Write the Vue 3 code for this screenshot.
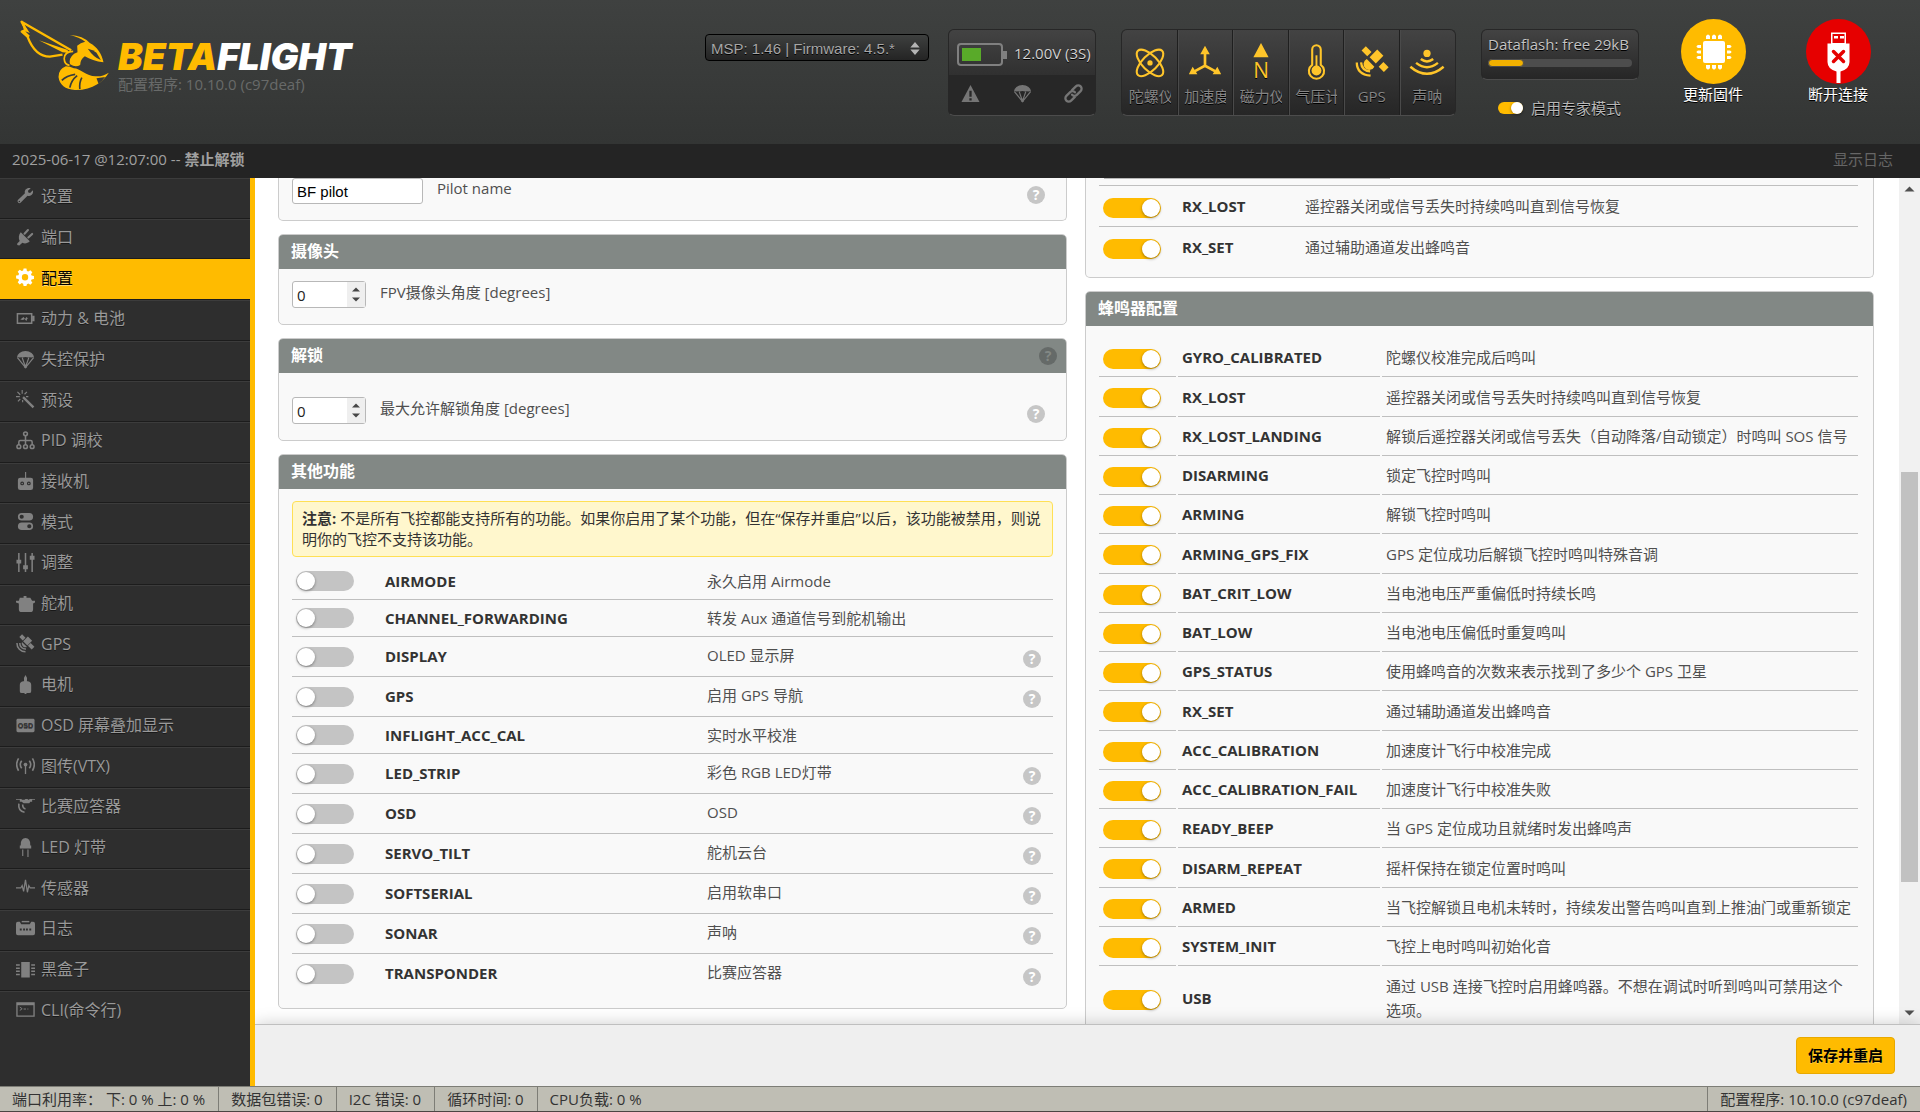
<script setup>
import { ref } from 'vue'

const icons = {
  wrench: '<path d="M15.5 1.2 12.6 4l.4 1.9 1.9.4 2.8-2.8c1 2.800-.9 6-4 5.900-.6 0-1.100-.1-1.600-.3L4.800 16.600A2 2 0 0 1 2 13.800l7.400-7.300C8.500 3.300 11.300.2 15.500 1.200Z"/><circle cx="3.500" cy="15.200" r=".8" fill="#2e2e2e"/>',
  plug: '<path d="m5 4.500 9.500 9.500c-2.300 2.300-5.300 2.800-7.800 1.600L3.500 18.500 1.300 18v-1.600l2.600-2.600C2.400 11 2.700 7 5 4.500Z"/><path d="m9 6 3.600-3.800M13 10l4-3.800" fill="none" stroke="currentColor" stroke-width="2.200" stroke-linecap="round"/>',
  gear: '<path fill-rule="evenodd" d="m8 .6 3 0 .5 2.500 1.500.7L15.100 2.300 17.200 4.400 15.800 6.500l.6 1.500 2.500.5v3l-2.500.5-.6 1.500 1.400 2.100-2.100 2.100-2.100-1.400-1.500.7L11 19H8l-.5-2.500-1.500-.7L3.900 17.300 1.800 15.100 3.200 13l-.6-1.500L.1 11V8l2.500-.5.6-1.500L1.800 3.900 3.900 1.800 6 3.200l1.500-.6ZM9.500 6.400a3.300 3.300 0 1 0 0 6.700 3.300 3.300 0 0 0 0-6.700Z"/>',
  battery: '<path d="M1.500 5h15v10h-15Z" fill="none" stroke="currentColor" stroke-width="1.600"/><path d="M17 7h2.500v6H17zM4.500 11 8 8.500l1.500 2 1.500-2.200 2 2-1-.2-1 2.400L9 10.500l-1.600 1.200Z"/>',
  chute: '<path d="M1 8a9 7 0 0 1 18 0Q17.500 7 16 8 14.500 7 13 8q-3-1.500-6 0Q5.500 7 4 8 2.500 7 1 8Z"/><path d="m1.500 8 8.500 10.500L18.500 8M6.500 8 10 18l3.500-10" fill="none" stroke="currentColor" stroke-width="1.300"/><path d="M8.800 15.500h2.400V19H8.800z"/>',
  wand: '<path d="m8.300 6.600 11 10.800-1.800 1.700L6.600 8.300Z"/><path d="M6.500 0v4M1.500 2l3 3M0 7h4M2 12l2.500-2.500M7 10.500V13M11.500 2 9 4.500M10.500 7H13" fill="none" stroke="currentColor" stroke-width="1.200"/>',
  tree: '<g fill="none" stroke="currentColor" stroke-width="1.600"><circle cx="10" cy="3" r="2"/><circle cx="3" cy="16.500" r="2"/><circle cx="10" cy="16.500" r="2"/><circle cx="17" cy="16.500" r="2"/><path d="M10 5v9.500M3 14.500v-3q0-1.500 1.500-1.500h11q1.500 0 1.500 1.500v3"/></g>',
  receiver: '<path d="M9.500 0h1.200v6.500h-1.200z"/><path fill-rule="evenodd" d="M4.500 6h11q2.500 0 2.500 2.500v8q0 2.500-2.500 2.500h-11Q2 19 2 16.500v-8Q2 6 4.500 6Zm2 4a2 2 0 1 0 0 4 2 2 0 0 0 0-4Zm7 0a2 2 0 1 0 0 4 2 2 0 0 0 0-4Z"/><circle cx="6.500" cy="12" r=".8"/><circle cx="13.500" cy="12" r=".8"/>',
  modes: '<path fill-rule="evenodd" d="M6 1h8a4 4 0 0 1 0 8H6a4 4 0 0 1 0-8Zm0 1.800a2.200 2.200 0 1 0 0 4.400 2.200 2.200 0 0 0 0-4.400ZM6 11h8a4 4 0 0 1 0 8H6a4 4 0 0 1 0-8Zm8 1.800a2.200 2.200 0 1 0 0 4.400 2.200 2.200 0 0 0 0-4.400Z"/>',
  sliders: '<path d="M3 0v20M10 0v20M17 0v20" stroke="currentColor" stroke-width="1.600"/><path d="M.5 7h5v4h-5zM7.500 13h5v4h-5zM14.500 3h5v4h-5z"/>',
  servo: '<path d="M8 2h3v2h4l2 3h3v2l-2 1v6q0 3-3 3H6q-3 0-3-3v-6L0 9V7h3l1-3h4Z"/>',
  sat: '<path d="m3.500 3.200 2.900-2.900 3.600 3.600-2.900 2.900ZM12.500 12.300l2.900-2.900 4 4-2.900 2.900ZM7.500 7.500l5-5 4.500 4.500-5 5Z"/><path d="M6.300 8.300a4 4 0 0 0 5.300 5.300Z"/><path d="M4 9.500a6 6 0 0 0 6.500 6.300M1 9.500a9 9 0 0 0 9 9.300" fill="none" stroke="currentColor" stroke-width="1.600"/>',
  motor: '<path d="M10 0q2.500 3 1.500 6.500h1q3.500.5 3.500 4V17q0 2-2 2h-3v1H9v-1H6q-2 0-2-2v-6.500q0-3.500 3.500-4h1Q7.500 3 10 0Z"/>',
  osd: '<path d="M2 3h16q1.500 0 1.500 1.500v11Q19.500 17 18 17H2Q.500 17 .500 15.500v-11Q.500 3 2 3Z"/><text x="10" y="12.800" text-anchor="middle" font-family="Liberation Sans" font-weight="bold" font-size="7.500" fill="#2e2e2e">OSD</text>',
  vtx: '<circle cx="10" cy="9" r="2"/><path d="M9.300 10h1.400v9H9.300z"/><path d="M6 5q-3 4 0 8M14 5q3 4 0 8M2.700 2.500q-4 6.500 0 13M17.300 2.500q4 6.500 0 13" fill="none" stroke="currentColor" stroke-width="1.700"/>',
  transponder: '<path d="M0 2h6v1h3l1-1h2l1 1h1V2h6v1h-3v2h-2l-1 1.500H8L6 5H4V3H0Z"/><path d="M3 7q-1 8 6 9M7 8q0 4 3 4.500" fill="none" stroke="currentColor" stroke-width="1.700"/>',
  led: '<path d="M5 7q0-7 5-7t5 7v1h1v3H4V8h1ZM6.500 12h1.200v7H6.500zM12 12h1.200v8H12z"/>',
  sensor: '<path d="M0 10.500h5l1.500-2.500 1.500 6 2-12 2 13 1.500-7 1.500 2.500h5" fill="none" stroke="currentColor" stroke-width="1.300"/>',
  log: '<path fill-rule="evenodd" d="M0 5q0-2 2-2h2l1.500 2.500h9L16 3h2q2 0 2 2v10q0 2-2 2H2q-2 0-2-2Zm4 5v2h2v-2Zm3.500 0v2h2v-2Zm3 0v2h2v-2Zm3.500 0v2h2v-2Z"/><path d="M6 2h8v1.500H6z"/>',
  chip: '<path d="M5.500 2h9v16.500h-9zM0 4.500h4v1.500H0zM0 8h4v1.500H0zM0 11h4v1.500H0zM0 14.500h4V16H0zM16 4.500h4v1.500h-4zM16 8h4v1.500h-4zM16 11h4v1.500h-4zM16 14.500h4V16h-4z"/>',
  cli: '<path d="M1 3h18v14H1Z" fill="none" stroke="currentColor" stroke-width="1.400"/><path d="M1 3h18v2.500H1z"/><path d="m4 7.500 2.500 1.700L4 11M8 9.500h2.500M12 9.500h1" fill="none" stroke="currentColor"/>',
}

const tabs = [
  ['wrench', '设置'], ['plug', '端口'], ['gear', '配置'], ['battery', '动力 & 电池'],
  ['chute', '失控保护'], ['wand', '预设'], ['tree', 'PID 调校'], ['receiver', '接收机'],
  ['modes', '模式'], ['sliders', '调整'], ['servo', '舵机'], ['sat', 'GPS'],
  ['motor', '电机'], ['osd', 'OSD 屏幕叠加显示'], ['vtx', '图传(VTX)'], ['transponder', '比赛应答器'],
  ['led', 'LED 灯带'], ['sensor', '传感器'], ['log', '日志'], ['chip', '黑盒子'], ['cli', 'CLI(命令行)'],
].map(([icon, label]) => ({ icon, label }))
const activeTab = '配置'

const sensors = [
  { label: '陀螺仪', svg: '<g fill="none" stroke="currentColor" stroke-width="2.200"><ellipse cx="20" cy="22" rx="18" ry="8" transform="rotate(45 20 22)"/><ellipse cx="20" cy="22" rx="18" ry="8" transform="rotate(-45 20 22)"/></g><circle cx="20" cy="22" r="2.800"/>' },
  { label: '加速度', svg: '<path d="M20 10v15L7 32M20 25l13 7" fill="none" stroke="currentColor" stroke-width="2.800"/><path d="m20 4 5 9H15ZM3 34l4-8 5 8ZM37 34l-4-8-5 8Z"/>' },
  { label: '磁力仪', svg: '<path d="m20 1 8 15H12Z"/><text x="20" y="38" text-anchor="middle" font-family="Open Sans" font-size="22">N</text>' },
  { label: '气压计', svg: '<path d="M16 24V8a4.500 4.500 0 0 1 9 0v16a8 8 0 1 1-9 0Z" fill="none" stroke="currentColor" stroke-width="2.200"/><circle cx="20.500" cy="30" r="5.200"/><path d="M19.500 14h2v14h-2z"/>' },
  { label: 'GPS', svg: '<path d="m9 9 4.500-4.500 6 6L15 15ZM27 26l5-5 5.500 5.500-5 5ZM17.500 16l8-8 6.500 6.500-8 8Z"/><path d="M14.500 18a6 6 0 1 0 8 8Z"/><path d="M8.500 21.500q.500 8.500 9.500 9.500M4 21.500q0 12.500 14.500 14" fill="none" stroke="currentColor" stroke-width="2.400"/>' },
  { label: '声呐', svg: '<circle cx="20" cy="12" r="3.800"/><path d="M13.500 18q6.500 5 13 0M8.500 22q11.500 9 23 0M2.500 26q17.500 15 35 0" fill="none" stroke="currentColor" stroke-width="2.600"/>' },
]

const features = ref([
  { name: 'AIRMODE', text: '永久启用 Airmode' },
  { name: 'CHANNEL_FORWARDING', text: '转发 Aux 通道信号到舵机输出' },
  { name: 'DISPLAY', text: 'OLED 显示屏', help: true },
  { name: 'GPS', text: '启用 GPS 导航', help: true },
  { name: 'INFLIGHT_ACC_CAL', text: '实时水平校准' },
  { name: 'LED_STRIP', text: '彩色 RGB LED灯带', help: true },
  { name: 'OSD', text: 'OSD', help: true },
  { name: 'SERVO_TILT', text: '舵机云台', help: true },
  { name: 'SOFTSERIAL', text: '启用软串口', help: true },
  { name: 'SONAR', text: '声呐', help: true },
  { name: 'TRANSPONDER', text: '比赛应答器', help: true },
].map((f) => ({ ...f, on: false })))

const dshot = ref([
  { name: 'RX_LOST', text: '遥控器关闭或信号丢失时持续鸣叫直到信号恢复', on: true },
  { name: 'RX_SET', text: '通过辅助通道发出蜂鸣音', on: true },
])

const beepers = ref([
  ['GYRO_CALIBRATED', '陀螺仪校准完成后鸣叫'],
  ['RX_LOST', '遥控器关闭或信号丢失时持续鸣叫直到信号恢复'],
  ['RX_LOST_LANDING', '解锁后遥控器关闭或信号丢失（自动降落/自动锁定）时鸣叫 SOS 信号'],
  ['DISARMING', '锁定飞控时鸣叫'],
  ['ARMING', '解锁飞控时鸣叫'],
  ['ARMING_GPS_FIX', 'GPS 定位成功后解锁飞控时鸣叫特殊音调'],
  ['BAT_CRIT_LOW', '当电池电压严重偏低时持续长鸣'],
  ['BAT_LOW', '当电池电压偏低时重复鸣叫'],
  ['GPS_STATUS', '使用蜂鸣音的次数来表示找到了多少个 GPS 卫星'],
  ['RX_SET', '通过辅助通道发出蜂鸣音'],
  ['ACC_CALIBRATION', '加速度计飞行中校准完成'],
  ['ACC_CALIBRATION_FAIL', '加速度计飞行中校准失败'],
  ['READY_BEEP', '当 GPS 定位成功且就绪时发出蜂鸣声'],
  ['DISARM_REPEAT', '摇杆保持在锁定位置时鸣叫'],
  ['ARMED', '当飞控解锁且电机未转时，持续发出警告鸣叫直到上推油门或重新锁定'],
  ['SYSTEM_INIT', '飞控上电时鸣叫初始化音'],
  ['USB', '通过 USB 连接飞控时启用蜂鸣器。不想在调试时听到鸣叫可禁用这个选项。'],
].map(([name, text]) => ({ name, text, on: true })))

const pilot = ref('BF pilot')
const camAngle = ref(0)
const armAngle = ref(0)
const expert = ref(true)
</script>

<template>
  <div class="app">
    <header class="top">
      <div class="logo">
        <svg class="bee" viewBox="58 58 272 216" fill="#ffbb00">
          <g fill="none" stroke="#ffbb00" stroke-width="7">
            <path d="M65 66 214 152M64 64l14 26-11 7 16 14C97 148 116 171 150 171l38-6" />
            <path d="M220 155q-26 0-27 22 1 18 16 20" stroke-width="5" />
          </g>
          <path d="M64 61 90 100 76 95 90 108 84 116 63 93 72 90Z" />
          <path d="m117 122 85 28 8 10-22-2Z" />
          <path d="M232 138q10-9 24-12-18-13-46-20 40 2 60 24c22 12 36 32 41 58-22-2-42-10-56-18q-14 10-14 26-14 8-30-2-6-18 12-32l10-4Z" />
          <path d="M264 147q16 3 26 12l13 22q-22-8-39-34Z" fill="#393b3a" />
          <path d="M198 200q-22 8-22 32 5 36 49 39c55 1 85-26 102-52q-19 12-37 11c-28 2-50-24-68-24q-12-6-24-6Z" />
          <path d="M226 224q-26 4-40 18M232 228q-18 14-22 36M246 234q-8 14-6 34" fill="none" stroke="#393b3a" stroke-width="5" />
          <path d="m290 236 6 16q12-8 20-20Z" fill="#393b3a" />
        </svg>
        <div>
          <div class="brand"><span>BETA</span>FLIGHT</div>
          <div class="version">配置程序: 10.10.0 (c97deaf)</div>
        </div>
      </div>

      <div class="port">
        <select aria-label="MSP">
          <option>MSP: 1.46 | Firmware: 4.5.*</option>
        </select>
        <svg viewBox="0 0 10 14" fill="#b4b4b4"><path d="m5 0 5 6H0ZM5 14 0 8h10Z" /></svg>
      </div>

      <div class="box power">
        <div class="volt">
          <svg width="50" height="24" viewBox="0 0 50 24">
            <rect x="1" y="1" width="44" height="21" rx="3" fill="none" stroke="#808080" stroke-width="2" />
            <path d="M46 8h4v8h-4z" fill="#808080" />
            <path d="M5 5h19v13H5z" fill="#59aa29" />
          </svg>
          <span>12.00V (3S)</span>
        </div>
        <div class="flags">
          <svg viewBox="0 0 20 20" fill="currentColor"><path fill-rule="evenodd" d="m10 1 9.500 18H.5ZM8.800 7v6.500h2.400V7Zm0 8v2.400h2.400V15Z" /></svg>
          <svg viewBox="0 0 20 20" fill="currentColor" v-html="icons.chute"></svg>
          <svg viewBox="0 0 20 20" fill="none" stroke="currentColor" stroke-width="2.400" stroke-linecap="round">
            <path d="m8.500 6.500 4-4a3.400 3.400 0 0 1 5 5l-4 4a3.400 3.400 0 0 1-5-.2M11.500 13.500l-4 4a3.400 3.400 0 0 1-5-5l4-4a3.400 3.400 0 0 1 5 .2" />
          </svg>
        </div>
      </div>

      <ul class="box sensors">
        <li v-for="s in sensors" :key="s.label">
          <svg viewBox="0 0 40 40" fill="currentColor" v-html="s.svg"></svg>
          <span>{{ s.label }}</span>
        </li>
      </ul>

      <div class="flash">
        <div class="box meter">
          <span>Dataflash: free 29kB</span>
          <div class="bar"><i></i></div>
        </div>
        <label class="expert">
          <input v-model="expert" type="checkbox" class="mini" />
          启用专家模式
        </label>
      </div>

      <button class="action" type="button">
        <svg viewBox="0 0 65 65">
          <circle cx="32.500" cy="32.500" r="32.500" fill="#ffbb00" />
          <g fill="#fff">
            <rect x="22" y="22" width="22" height="22" rx="2" />
            <path d="M25 17q2-3 4 0v3h-4zM31 17q2-3 4 0v3h-4zM37 17q2-3 4 0v3h-4zM25 46h4v3q-2 3-4 0zM31 46h4v3q-2 3-4 0zM37 46h4v3q-2 3-4 0zM20 26v3h-3q-3-1.500 0-3zM20 31.500v3h-3q-3-1.500 0-3zM20 37v3h-3q-3-1.500 0-3zM46 26v3h3q3-1.500 0-3zM46 31.500v3h3q3-1.500 0-3zM46 37v3h3q3-1.500 0-3z" />
          </g>
        </svg>
        <span>更新固件</span>
      </button>
      <button class="action last" type="button">
        <svg viewBox="0 0 65 65">
          <circle cx="32.500" cy="32.500" r="32.500" fill="#e60000" />
          <path d="M25 13.500h15v11h3.500V43q0 7-9 9.500V64h-4V52.500q-9-2.500-9-9.500V24.500H25Z" fill="#fff" />
          <path d="M26.500 15h12v9h-12z" fill="#e60000" />
          <path d="M28 17h4v2.500h-4zM34 17h4v2.500h-4z" fill="#fff" />
          <path d="m27.500 32.500 10 10M37.500 32.500l-10 10" stroke="#e60000" stroke-width="3.500" stroke-linecap="round" />
        </svg>
        <span>断开连接</span>
      </button>
    </header>

    <div class="logbar">
      <span>2025-06-17 @12:07:00 -- <b>禁止解锁</b></span>
      <a href="#">显示日志</a>
    </div>

    <div class="body">
      <nav class="side">
        <ul>
          <li v-for="t in tabs" :key="t.label" :class="{ active: t.label === activeTab }">
            <a href="#">
              <svg viewBox="0 0 20 20" fill="currentColor" v-html="icons[t.icon]"></svg>
              {{ t.label }}
            </a>
          </li>
        </ul>
      </nav>

      <main class="main">
        <div class="scroll">
          <div class="cols">
            <div class="col">
              <section class="panel cut">
                <div class="field pilot">
                  <input id="pilot" v-model="pilot" type="text" class="text" />
                  <label for="pilot">Pilot name</label>
                  <span class="help">?</span>
                </div>
              </section>

              <section class="panel">
                <h2>摄像头</h2>
                <div class="field">
                  <span class="num">
                    <input id="cam" v-model="camAngle" type="number" />
                    <svg viewBox="0 0 18 24" fill="#464646"><path d="m9 5 4 4H5ZM9 19l-4-4h8Z" /></svg>
                  </span>
                  <label for="cam">FPV摄像头角度 [degrees]</label>
                </div>
              </section>

              <section class="panel">
                <h2>解锁 <span class="help dark">?</span></h2>
                <div class="field arm">
                  <span class="num">
                    <input id="arm" v-model="armAngle" type="number" />
                    <svg viewBox="0 0 18 24" fill="#464646"><path d="m9 5 4 4H5ZM9 19l-4-4h8Z" /></svg>
                  </span>
                  <label for="arm">最大允许解锁角度 [degrees]</label>
                  <span class="help">?</span>
                </div>
              </section>

              <section class="panel">
                <h2>其他功能</h2>
                <p class="note"><b>注意:</b> 不是所有飞控都能支持所有的功能。如果你启用了某个功能，但在“保存并重启”以后，该功能被禁用，则说明你的飞控不支持该功能。</p>
                <table class="features">
                  <tbody>
                    <tr v-for="f in features" :key="f.name" :class="{ tall: f.help }">
                      <td class="c-toggle"><input :id="'f-' + f.name" v-model="f.on" type="checkbox" class="toggle" /></td>
                      <td class="c-name"><label :for="'f-' + f.name">{{ f.name }}</label></td>
                      <td class="c-text">{{ f.text }}</td>
                      <td class="c-help"><span v-if="f.help" class="help">?</span></td>
                    </tr>
                  </tbody>
                </table>
              </section>
            </div>

            <div class="col">
              <section class="panel cut">
                <div class="tone"></div>
                <table class="beeps dshot">
                  <tbody>
                    <tr v-for="b in dshot" :key="b.name">
                      <td class="c-toggle"><input :id="'d-' + b.name" v-model="b.on" type="checkbox" class="toggle" /></td>
                      <td class="c-name"><label :for="'d-' + b.name">{{ b.name }}</label></td>
                      <td class="c-text">{{ b.text }}</td>
                    </tr>
                  </tbody>
                </table>
              </section>

              <section class="panel">
                <h2>蜂鸣器配置</h2>
                <table class="beeps">
                  <tbody>
                    <tr v-for="b in beepers" :key="b.name">
                      <td class="c-toggle"><input :id="'b-' + b.name" v-model="b.on" type="checkbox" class="toggle" /></td>
                      <td class="c-name"><label :for="'b-' + b.name">{{ b.name }}</label></td>
                      <td class="c-text">{{ b.text }}</td>
                    </tr>
                  </tbody>
                </table>
              </section>
            </div>
          </div>

          <div class="track">
            <svg viewBox="0 0 21 21" fill="#505050"><path d="m10.500 8.500 5 5h-10Z" /></svg>
            <i class="before"></i>
            <i class="thumb"></i>
            <i class="after"></i>
            <svg viewBox="0 0 21 21" fill="#505050"><path d="m10.500 12.500 5-5h-10Z" /></svg>
          </div>
        </div>
        <div class="savebar"><button type="button">保存并重启</button></div>
      </main>
    </div>

    <footer class="status">
      <span>端口利用率： 下: 0 % 上: 0 %</span>
      <span>数据包错误: 0</span>
      <span>I2C 错误: 0</span>
      <span>循环时间: 0</span>
      <span>CPU负载: 0 %</span>
      <span class="ver">配置程序: 10.10.0 (c97deaf)</span>
    </footer>
  </div>
</template>

<style>
body {
  margin: 0;
  overflow: hidden;
}
</style>

<style scoped>
* {
  box-sizing: border-box;
}
.app {
  display: flex;
  flex-direction: column;
  height: 100vh;
  font: 15px/20px "Open Sans", "Noto Sans CJK SC", sans-serif;
  color: #4f4f4f;
}
ul {
  list-style: none;
  margin: 0;
  padding: 0;
}
button,
input,
select {
  font: inherit;
  margin: 0;
}
a {
  color: inherit;
  text-decoration: none;
}

/* header */
.top {
  display: flex;
  align-items: flex-start;
  height: 144px;
  padding-right: 37px;
  background: linear-gradient(#3f4140, #333534);
}
.logo {
  display: flex;
  margin-right: auto;
  padding: 19px 0 0 19px;
}
.bee {
  width: 91px;
  height: 72px;
  margin-right: 8px;
}
.brand {
  margin-top: 20px;
  font: italic 900 37px/35px Inter, "Liberation Sans", sans-serif;
  color: #fff;
}
.brand span {
  color: #ffbb00;
}
.version {
  color: #686a69;
}
.port {
  position: relative;
  margin: 34px 19px 0 0;
}
.port select {
  display: block;
  appearance: none;
  width: 224px;
  height: 27px;
  padding: 2px 5px 0;
  border: 1px solid #000;
  border-radius: 4px;
  background: linear-gradient(#3e403f, #242424);
  color: #a6a6a6;
  font: 15px/20px "Liberation Sans", sans-serif;
  text-shadow: 0 1px #000;
}
.port svg {
  position: absolute;
  top: 8px;
  right: 9px;
  width: 10px;
  height: 13px;
  pointer-events: none;
}
.box {
  border: 1px solid #272727;
  border-bottom-color: #4c4c4c;
  border-radius: 6px;
  background: linear-gradient(#434343, #262626);
  text-shadow: 0 1px #000;
}
.power {
  width: 148px;
  height: 87px;
  margin: 29px 25px 0 0;
  background: #272727;
  overflow: hidden;
}
.volt {
  display: flex;
  align-items: flex-start;
  gap: 7px;
  height: 45px;
  padding: 13px 0 0 8px;
  background: linear-gradient(#434343, #303030);
  color: #d2d2d2;
  white-space: nowrap;
}
.volt svg {
  flex: none;
}
.flags {
  display: flex;
  justify-content: space-between;
  padding: 9px 12px;
  color: #757575;
}
.flags svg {
  width: 19px;
  height: 19px;
}
.sensors {
  display: flex;
  width: 335px;
  height: 87px;
  margin: 29px 25px 0 0;
}
.sensors li {
  display: flex;
  flex-direction: column;
  align-items: center;
  flex: 1;
  min-width: 0;
  padding: 12px 6px 0;
  border-right: 1px solid #1f1f1f;
  border-left: 1px solid #4a4a4a;
  color: #858585;
}
.sensors li:first-child {
  border-left-color: transparent;
}
.sensors li:last-child {
  border-right-color: transparent;
}
.sensors svg {
  flex: none;
  width: 38px;
  height: 38px;
  margin-bottom: 6px;
  color: #ffc52a;
}
.sensors span {
  max-width: 42px;
  overflow: hidden;
  white-space: nowrap;
}
.flash {
  width: 158px;
  margin: 29px 29px 0 0;
}
.meter {
  height: 51px;
  padding: 4px 6px 0;
  color: #c4c4c4;
  white-space: nowrap;
}
.bar {
  height: 8px;
  margin-top: 5px;
  border-radius: 4px;
  background: #4d4d4d;
}
.bar i {
  display: block;
  width: 25%;
  height: 8px;
  border: 1px solid #4d4d4d;
  border-radius: 4px;
  background: #f2b100;
}
.expert {
  display: flex;
  align-items: center;
  gap: 8px;
  margin: 18px 0 0 17px;
  color: #b8b8b8;
  text-shadow: 0 1px #000;
}
.action {
  display: flex;
  flex-direction: column;
  align-items: center;
  width: 90px;
  margin-top: 19px;
  padding: 0;
  border: 0;
  background: none;
  color: #fff;
  text-shadow: 0 1px #000;
}
.action svg {
  width: 65px;
  height: 65px;
}
.action.last {
  margin-left: 35px;
}
.logbar {
  display: flex;
  justify-content: space-between;
  height: 34px;
  padding: 5px 27px 0 12px;
  background: #242424;
  color: #a0a0a0;
}
.logbar a {
  color: #666;
}

/* side tabs */
.body {
  display: flex;
  flex: 1;
  min-height: 0;
}
.side {
  display: flex;
  width: 255px;
  padding-bottom: 54px;
  border-right: 5px solid #ffbb00;
  background: #2e2e2e;
}
.side ul {
  display: flex;
  flex-direction: column;
  flex: 1;
}
.side li {
  flex: 1;
  border-top: 1px solid #3c3c3c;
  border-bottom: 1px solid #1c1c1c;
}
.side li:last-child {
  border-bottom-color: transparent;
}
.side a {
  display: flex;
  align-items: center;
  gap: 6px;
  height: 100%;
  padding: 0 0 4px 16px;
  font-size: 16px;
  color: #999;
  text-shadow: 0 1px rgba(0, 0, 0, 0.45);
}
.side svg {
  width: 19px;
  height: 19px;
  color: #818181;
}
.side .active {
  border-top-color: #ffbb00;
  background: #ffbb00;
}
.side .active a {
  color: #000;
  text-shadow: 0 1px rgba(255, 255, 255, 0.45);
}
.side .active svg {
  color: #fff;
}

/* content */
.main {
  display: flex;
  flex-direction: column;
  flex: 1;
  min-width: 0;
}
.scroll {
  display: flex;
  flex: 1;
  min-height: 0;
  background: #fff;
}
.cols {
  display: flex;
  gap: 18px;
  flex: 1;
  min-width: 0;
  padding: 0 25px 0 23px;
  overflow: hidden;
}
.col {
  flex: 1;
  min-width: 0;
}
.panel {
  margin-bottom: 13px;
  border: 1px solid #ccc;
  border-radius: 5px;
  background: #f9f9f9;
}
.panel.cut {
  border-top: 0;
  border-radius: 0 0 5px 5px;
}
h2 {
  display: flex;
  justify-content: space-between;
  margin: 0;
  padding: 6px 9px 8px 12px;
  border-radius: 4px 4px 0 0;
  background: #828885;
  color: #fff;
  font-size: 16px;
  line-height: 20px;
}
.field {
  display: flex;
  align-items: flex-start;
  padding: 12px 21px 16px 13px;
}
.field label {
  margin-left: 14px;
  padding-top: 1px;
}
.field .help {
  margin: 8px 0 0 auto;
}
.pilot {
  padding-top: 0;
}
.pilot label {
  padding-top: 0;
}
.arm {
  padding-top: 24px;
}
.text {
  width: 131px;
  height: 26px;
  padding: 0 4px;
  border: 1px solid #b8b8b8;
  border-radius: 3px;
  background: #fff;
  color: #000;
  font-family: "Liberation Sans", sans-serif;
}
.num {
  display: flex;
  width: 74px;
  height: 27px;
  border: 1px solid #b8b8b8;
  border-radius: 3px;
  background: #fff;
}
.num input {
  flex: 1;
  min-width: 0;
  padding: 0 4px;
  border: 0;
  background: none;
  appearance: textfield;
  color: #222;
}
.num input::-webkit-inner-spin-button {
  display: none;
}
.num svg {
  width: 18px;
  height: 25px;
  background: #efefef;
}
.help {
  display: block;
  width: 18px;
  height: 18px;
  border-radius: 9px;
  background: #c6c6c6;
  color: #fff;
  font: bold 14px/18px "Open Sans", sans-serif;
  text-align: center;
}
.help.dark {
  background: #656a68;
  color: #828885;
  margin-top: 2px;
}
.note {
  margin: 12px 13px 6px;
  padding: 6px 9px;
  border: 1px solid #ffe055;
  border-radius: 4px;
  background: #fff7cd;
  color: #333;
  line-height: 21px;
}
table {
  width: 100%;
  table-layout: fixed;
  border-spacing: 0;
}
td {
  padding: 0;
  border-bottom: 1px solid #bfbfbf;
}
tr:last-child td {
  border-bottom: 0;
}
.c-name {
  color: #333;
  font-weight: 700;
}
.features {
  width: calc(100% - 26px);
  margin: 0 13px 14px;
}
.features tr {
  height: 37px;
}
.features .tall {
  height: 40px;
}
.features .c-toggle {
  width: 93px;
  padding-left: 4px;
}
.features .c-name {
  width: 322px;
}
.features .c-help {
  width: 30px;
}
.c-help .help {
  margin-top: 5px;
}
.features .tall .c-text {
  padding-bottom: 4px;
}
.features .tall .c-name {
  padding-bottom: 2px;
}
.tone {
  width: 286px;
  height: 1px;
  margin-left: 18px;
  background: #b8b8b8;
}
.beeps {
  width: calc(100% - 24px);
  margin: 12px 13px 12px 11px;
  border-spacing: 2px 0;
}
.beeps tr {
  height: 39px;
}
.beeps tr:nth-child(4n + 2) {
  height: 40px;
}
.beeps .c-toggle {
  width: 77px;
  padding: 3px 0 0 4px;
}
.beeps .c-name {
  width: 202px;
  padding: 0 0 0 4px;
}
.beeps .c-text {
  padding: 0 4px;
}
.beeps tr:nth-child(17) .c-text {
  padding: 8px 4px;
  line-height: 24px;
}
.dshot {
  width: calc(100% - 28px);
  margin: 6px 15px 10px 13px;
  border-top: 1px solid #bfbfbf;
  border-spacing: 0;
}
.dshot tr:first-child {
  height: 41px;
}
.dshot .c-name {
  width: 125px;
  padding-left: 6px;
}

/* switches */
.toggle,
.mini {
  display: flow-root;
  appearance: none;
  width: 58px;
  height: 20px;
  border-radius: 10px;
  background: #c4c4c4;
}
.toggle::before,
.mini::before {
  content: "";
  display: block;
  width: 18px;
  height: 18px;
  margin: 1px;
  border-radius: 9px;
  background: #fff;
  box-shadow: 0 1px 3px rgba(0, 0, 0, 0.4);
}
.toggle:checked,
.mini:checked {
  background: #ffbb00;
}
.toggle:checked::before {
  margin-left: 39px;
}
.mini {
  width: 25px;
  height: 12px;
}
.mini::before {
  width: 12px;
  height: 12px;
  margin: 0;
}
.mini:checked::before {
  margin-left: 13px;
}

/* scroll track */
.track {
  display: flex;
  flex-direction: column;
  width: 21px;
  background: #f1f1f1;
}
.track svg {
  width: 21px;
  height: 21px;
}
.before {
  flex: 273;
}
.thumb {
  flex: 410;
  margin: 0 2px;
  background: #c1c1c1;
}
.after {
  flex: 121;
}
.savebar {
  position: relative;
  display: flex;
  justify-content: flex-end;
  height: 62px;
  padding: 12px 25px 0;
  border-top: 1px solid #bfbfbf;
  background: #efefef;
  box-shadow: 0 0 16px rgba(0, 0, 0, 0.2);
  clip-path: inset(-20px 0 0 0);
}
.savebar button {
  width: 99px;
  height: 37px;
  padding: 0 0 1px;
  border: 1px solid #e8a900;
  border-radius: 4px;
  background: #ffbb00;
  color: #000;
  font-weight: 600;
  text-shadow: 0 1px rgba(255, 255, 255, 0.25);
}

/* footer */
.status {
  display: flex;
  height: 26px;
  border-top: 1px solid #7d7d76;
  border-bottom: 1px solid #4b4643;
  background: #bfbeb4;
  color: #333;
  line-height: 24px;
}
.status span {
  padding: 0 13px 0 12px;
  border-right: 1px solid #7d7d76;
  white-space: nowrap;
}
.status span:nth-child(5) {
  border-right: 0;
}
.status .ver {
  margin-left: auto;
  border-right: 0;
  border-left: 1px solid #7d7d76;
}
</style>
